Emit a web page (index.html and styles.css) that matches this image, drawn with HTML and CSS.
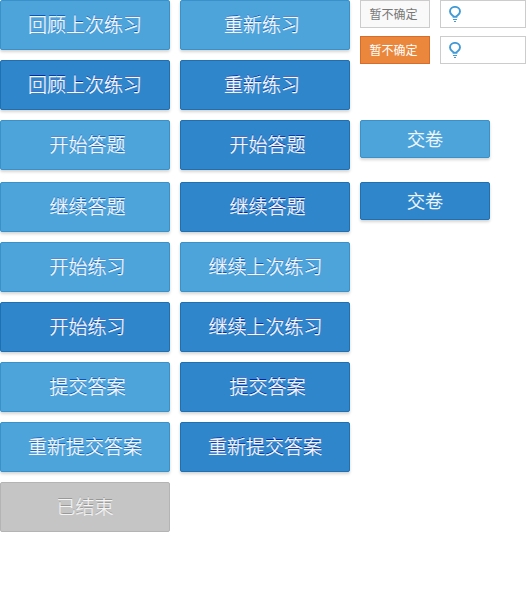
FILE: index.html
```html
<!DOCTYPE html>
<html lang="zh-CN">
<head>
<meta charset="utf-8">
<title>练习按钮</title>
<link rel="stylesheet" href="styles.css">
</head>
<body>
<main class="sheet">
  <div class="column">
    <a class="btn">回顾上次练习</a>
    <a class="btn dark">回顾上次练习</a>
    <a class="btn right">开始答题</a>
    <a class="btn right spaced">继续答题</a>
    <a class="btn right">开始练习</a>
    <a class="btn dark right">开始练习</a>
    <a class="btn right">提交答案</a>
    <a class="btn">重新提交答案</a>
    <a class="btn ended">已结束</a>
  </div>
  <div class="column">
    <a class="btn left">重新练习</a>
    <a class="btn dark left">重新练习</a>
    <a class="btn dark right">开始答题</a>
    <a class="btn dark right spaced">继续答题</a>
    <a class="btn nudge">继续上次练习</a>
    <a class="btn dark nudge">继续上次练习</a>
    <a class="btn dark right">提交答案</a>
    <a class="btn dark">重新提交答案</a>
  </div>
  <div class="side">
    <div class="tools">
      <a class="mark">暂不确定</a>
      <a class="hint"><svg class="bulb" viewBox="0 0 12 16"><path d="M4.5 10.7C4.3 9.3 1 8.6 1 5.5a5 4.6 0 0 1 10 0c0 3.1-3.3 3.8-3.5 5.2Z" fill="none" stroke="#419ad5" stroke-width="1.9"/><path d="M4 13.5h4M5 15.5h2" stroke="#419ad5" stroke-width="1"/></svg></a>
    </div>
    <div class="tools">
      <a class="mark active">暂不确定</a>
      <a class="hint"><svg class="bulb" viewBox="0 0 12 16"><path d="M4.5 10.7C4.3 9.3 1 8.6 1 5.5a5 4.6 0 0 1 10 0c0 3.1-3.3 3.8-3.5 5.2Z" fill="none" stroke="#419ad5" stroke-width="1.9"/><path d="M4 13.5h4M5 15.5h2" stroke="#419ad5" stroke-width="1"/></svg></a>
    </div>
    <div class="submits">
      <a class="btn submit">交卷</a>
      <a class="btn dark submit">交卷</a>
    </div>
  </div>
</main>
</body>
</html>
```
FILE: styles.css
```css
* { box-sizing: border-box; }
body {
  margin: 0;
  background: #fff;
  font-family: "Noto Sans CJK SC", sans-serif;
}
.sheet {
  display: flex;
  gap: 10px;
  width: 526px;
  height: 600px;
}
.column {
  display: flex;
  flex-direction: column;
  gap: 10px;
  width: 170px;
}
.btn {
  display: block;
  height: 50px;
  border: 1px solid #3a91c9;
  border-radius: 2px;
  background: #4ca4da;
  box-shadow: 0 2px 3px rgba(0, 0, 0, .17);
  color: #f8faff;
  font-size: 19px;
  font-weight: 300;
  line-height: 46px;
  text-align: center;
  text-shadow: 0 -1px 0 #0d57b8;
  -webkit-text-stroke: .3px #f8faff;
  white-space: nowrap;
}
.dark {
  border-color: #1f70b3;
  background: #2f86ca;
  text-shadow: 0 -1px 0 #0828a4;
}
.left { padding-right: 6px; }
.right { padding-left: 5px; }
.nudge { padding-left: 1px; }
.spaced { margin-top: 2px; }
.ended {
  border-color: #b4b4b4;
  background: #c5c5c5;
  box-shadow: none;
  color: #f5f5f5;
  text-shadow: 0 -1px 0 #999;
  -webkit-text-stroke: .2px #f5f5f5;
}
.side {
  display: flex;
  flex-direction: column;
  gap: 8px;
  width: 166px;
}
.tools {
  display: flex;
  gap: 10px;
}
.mark {
  width: 70px;
  height: 28px;
  border: 1px solid #ccc;
  background: #f9f9f9;
  color: #777;
  font-size: 12px;
  line-height: 26px;
  padding-right: 3px;
  text-align: center;
}
.active {
  border-color: #d86d2b;
  background: #eb873c;
  color: #fff;
}
.hint {
  flex: 1;
  height: 28px;
  padding: 5px 8px;
  border: 1px solid #ccc;
}
.bulb {
  display: block;
  width: 12px;
  height: 16px;
}
.submits {
  display: flex;
  flex-direction: column;
  gap: 24px;
  margin-top: 48px;
}
.submit {
  width: 130px;
  height: 38px;
  font-size: 18px;
  line-height: 35px;
  color: #fff;
  text-shadow: none;
}
```
